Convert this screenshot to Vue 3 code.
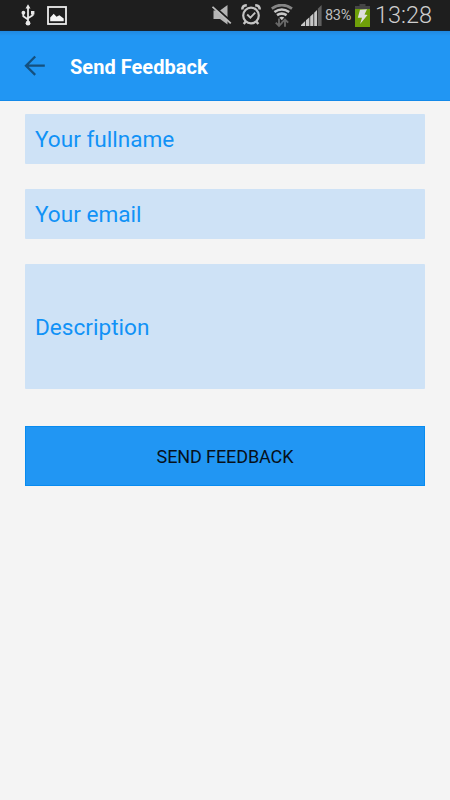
<script setup>
import { ref } from 'vue'

const fullname = ref('')
const email = ref('')
const description = ref('')
</script>

<template>
  <div class="screen">
    <header class="status">
      <svg class="usb" width="14" height="22" viewBox="0 0 14 22">
        <path d="M7 3V19M2.3 8V12.2L7 15.5M11.7 8V11.2L7 14.2" fill="none" stroke="#e8e8e8" stroke-width="1.8" />
        <path d="M7 0.3L9.5 4.5H4.5ZM10 7H13.4V10.4H10Z" fill="#e8e8e8" />
        <circle cx="2.4" cy="8.7" r="1.9" fill="#e8e8e8" />
        <circle cx="7" cy="19.2" r="2.4" fill="#e8e8e8" />
      </svg>
      <svg class="photo" width="20" height="19" viewBox="0 0 20 19">
        <rect x="1" y="1" width="18" height="17" fill="none" stroke="#ececec" stroke-width="1.8" />
        <path d="M3.2 15.2V11.5L6.7 7.7L9.5 10.7L12.4 9.3L16.7 12.5V15.2Z" fill="#f4f4f4" />
      </svg>
      <svg class="mute" width="20" height="21" viewBox="0 0 20 21">
        <path d="M1.5 5.5H8L15.5 0V19.5L8 14H1.5Z" fill="#b4b4b4" />
        <path d="M1 0.4L19.6 17" stroke="#1e1e1e" stroke-width="2.2" />
        <path d="M0.5 1.8L18.8 18.4" stroke="#bdbdbd" stroke-width="1.8" />
      </svg>
      <svg class="alarm" width="20" height="22" viewBox="0 0 20 22">
        <circle cx="10" cy="11.5" r="7.8" fill="none" stroke="#c4c4c4" stroke-width="2.2" />
        <path d="M1.3 5.5Q1.2 1.5 5.8 1.2M14.2 1.2Q18.8 1.5 18.7 5.5" fill="none" stroke="#c4c4c4" stroke-width="2.5" />
        <path d="M6.2 10.5L9.4 13.7L14.2 8.7" fill="none" stroke="#c4c4c4" stroke-width="1.8" />
        <path d="M4.7 17.5L2.7 20M15.3 17.5L17.3 20" stroke="#c4c4c4" stroke-width="2.4" />
      </svg>
      <svg class="wifi" width="22" height="24" viewBox="0 0 22 24">
        <path d="M0.7 4.6Q10.8 -2.4 21 4.6" fill="none" stroke="#858585" stroke-width="2.8" />
        <path d="M3.4 8Q10.8 3 18.2 8M6 11.2Q10.8 8 15.6 11.2" fill="none" stroke="#c8c8c8" stroke-width="2.6" />
        <path d="M8.3 13.6Q10.8 12 13.3 13.6L10.8 16.2Z" fill="#c8c8c8" />
        <path d="M8 14.5V21.5M4.8 18.6L8 21.8L11.2 18.6M14 22.8V15.5M10.8 18.7L14 15.5L17.2 18.7" fill="none" stroke="#686868" stroke-width="1.9" />
      </svg>
      <svg class="signal" width="21" height="21" viewBox="0 0 21 21">
        <path d="M0 21V20L4.2 16V21ZM5 21V15.3L8.4 12.2V21ZM9.2 21V11.4L12.4 8.4V21ZM13.2 21V7.7L16 5V21Z" fill="#c8c8c8" />
        <path d="M16.8 21V3.8L20.6 0V21Z" fill="#606060" />
      </svg>
      <span class="percent">83%</span>
      <svg class="battery" width="15" height="23" viewBox="0 0 15 23">
        <path d="M4.5 0H10.5V2H15V7H0V2H4.5Z" fill="#454545" />
        <rect y="5" width="15" height="18" fill="#6f9f09" />
        <path d="M5 5.7L12 5.3L9.5 10.5L12.5 11L5.1 20L7 13.7H2.8Z" fill="#dedede" />
      </svg>
      <time class="clock">13:28</time>
    </header>
    <nav class="appbar">
      <svg class="back" width="22" height="22" viewBox="0 0 22 22">
        <path d="M11.2 1.5L2 10.7L11.2 19.9M2.3 10.7H20.8" fill="none" stroke="#14507f" stroke-width="2.3" />
      </svg>
      <h1>Send Feedback</h1>
    </nav>
    <form class="form" @submit.prevent>
      <input v-model="fullname" class="name" type="text" placeholder="Your fullname" />
      <input v-model="email" class="email" type="text" placeholder="Your email" />
      <input v-model="description" class="description" type="text" placeholder="Description" />
      <button type="submit">SEND FEEDBACK</button>
    </form>
  </div>
</template>

<style>
body {
  background: #f4f4f4;
}
</style>

<style scoped>
* {
  box-sizing: border-box;
}
.screen {
  height: 800px;
  background: #f4f4f4;
  font-family: Roboto, sans-serif;
  overflow: hidden;
}
.status {
  display: flex;
  align-items: flex-start;
  height: 31px;
  background: #1e1e1e;
  border-bottom: 1px solid #17222c;
  white-space: nowrap;
}
.status > * {
  flex: none;
}
.usb {
  margin: 4px 0 0 21px;
}
.photo {
  margin: 6px 0 0 12px;
}
.mute {
  margin: 5px 0 0 145px;
}
.alarm {
  margin: 4px 0 0 9px;
}
.wifi {
  margin: 4px 0 0 10px;
}
.signal {
  margin: 5px 0 0 8px;
}
.percent {
  width: 28px;
  margin: 6px 0 0 3px;
  color: #bdbdbd;
  font-size: 14.5px;
  line-height: 20px;
  letter-spacing: -0.3px;
}
.battery {
  margin: 4px 0 0 2px;
}
.clock {
  margin: 1px 0 0 5px;
  color: #cecece;
  font-size: 23.5px;
  line-height: 28px;
  font-weight: 300;
}
.appbar {
  display: flex;
  align-items: center;
  height: 70px;
  padding-left: 24px;
  background: linear-gradient(#2189df, #2196f3 5px);
  border-bottom: 1px solid #1289e9;
}
.back {
  margin-top: 1px;
}
h1 {
  margin: 2px 0 0 24px;
  color: #fff;
  font-size: 20px;
  line-height: 26px;
  font-weight: 700;
  letter-spacing: 0.03px;
}
.form {
  display: flex;
  flex-direction: column;
  padding: 13px 25px 0;
}
input {
  width: 100%;
  height: 50px;
  margin: 0 0 25px;
  padding: 0 10px;
  border: 0;
  border-radius: 1px;
  background: #cee2f6;
  color: #1192f6;
  font: 400 22.6px Roboto, sans-serif;
  outline: none;
}
input::placeholder {
  color: #1192f6;
  opacity: 1;
}
.description {
  height: 125px;
  margin-bottom: 37px;
  padding-top: 2px;
}
button {
  height: 60px;
  padding: 1px 0 0;
  border: 1px solid #078bf0;
  background: #2196f3;
  color: #07111a;
  font: 400 18px Roboto, sans-serif;
  letter-spacing: -0.1px;
}
</style>
